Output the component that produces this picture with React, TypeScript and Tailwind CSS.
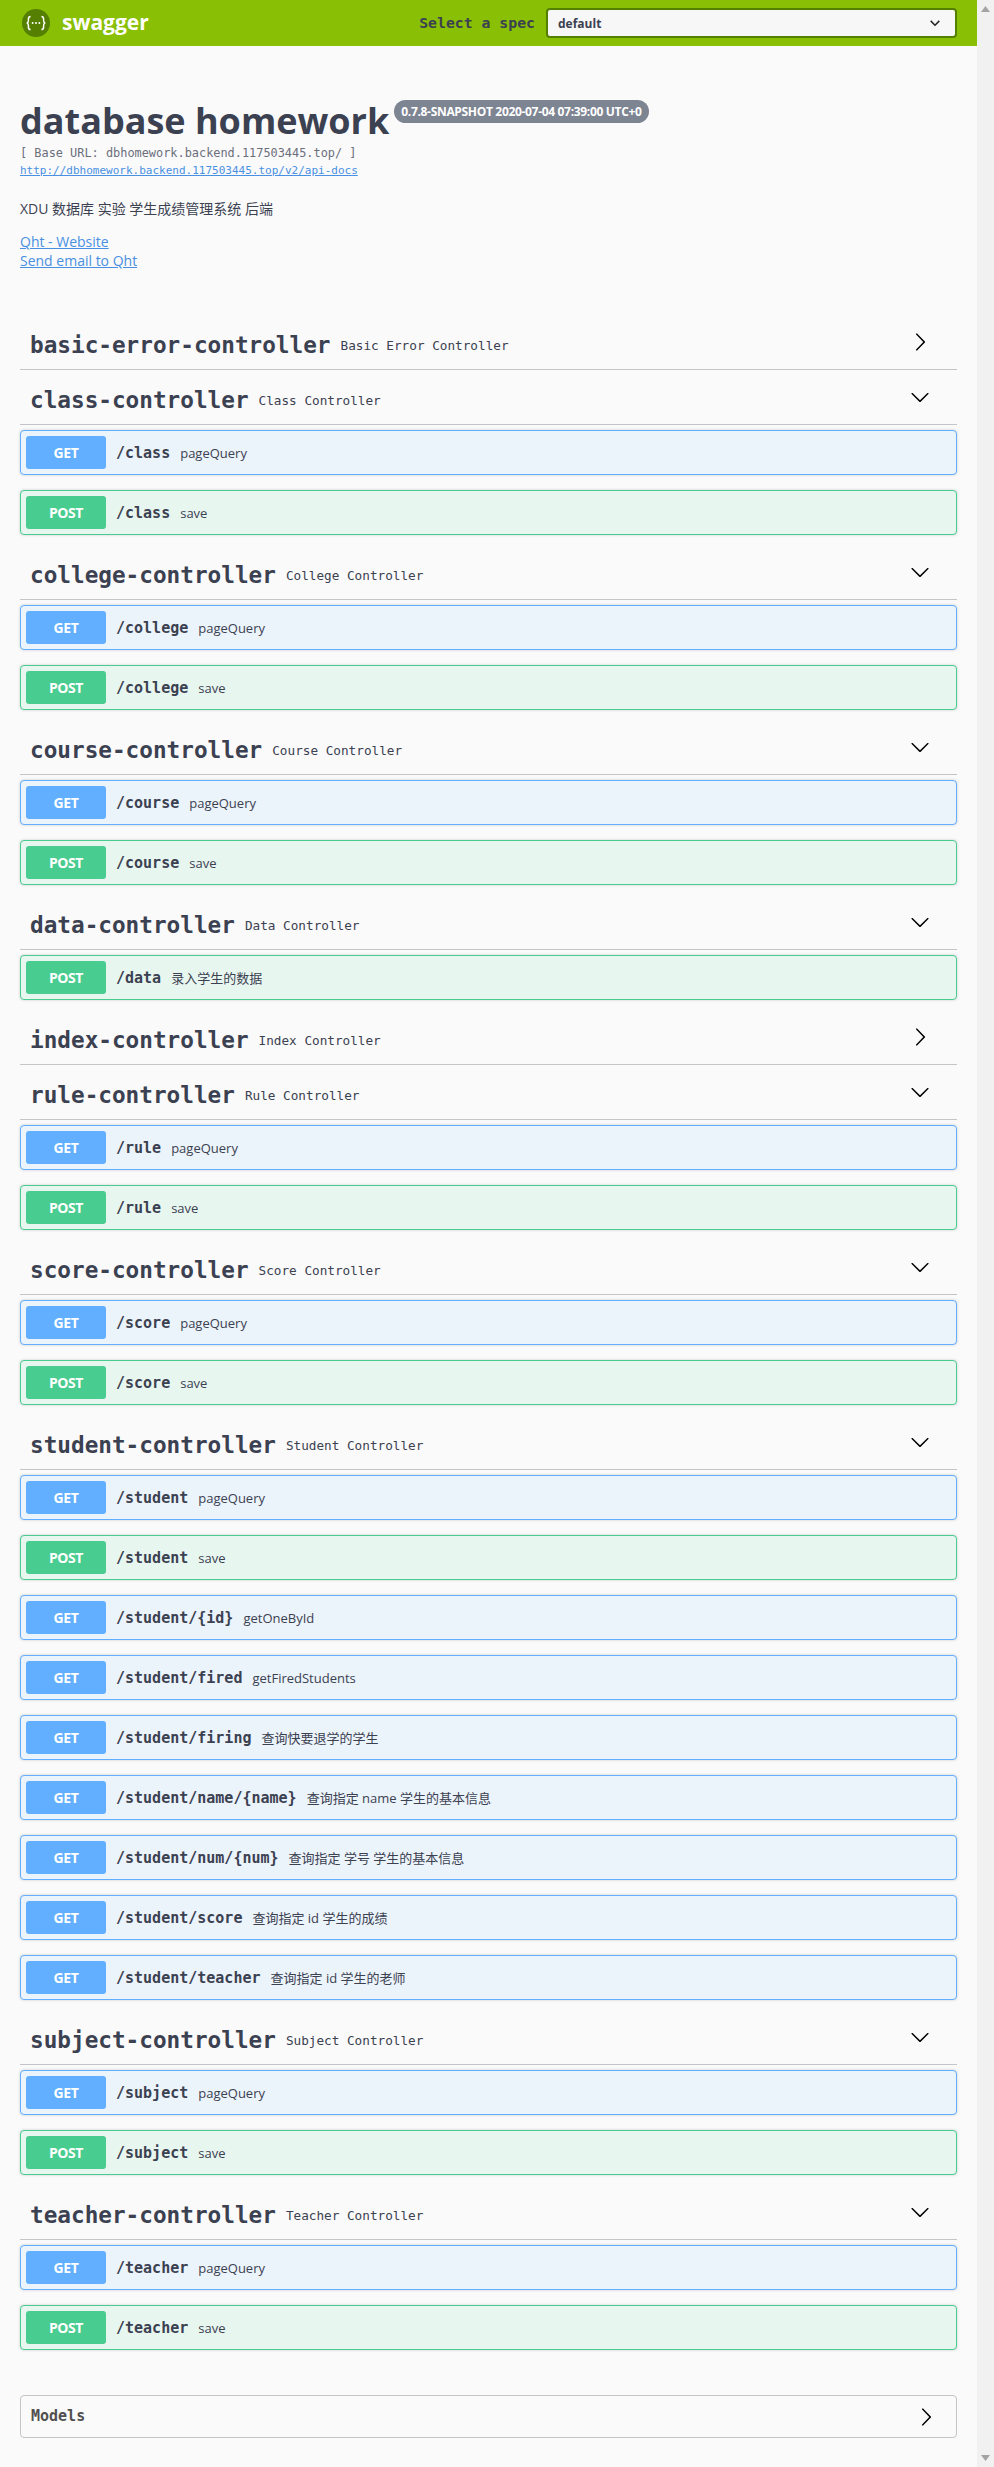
import React from "react"

type Op = { method: "GET" | "POST"; path: string; summary: string }
type Tag = { name: string; desc: string; open: boolean; ops: Op[] }

const crud = (path: string): Op[] => [
  { method: "GET", path, summary: "pageQuery" },
  { method: "POST", path, summary: "save" },
]

const tags: Tag[] = [
  { name: "basic-error-controller", desc: "Basic Error Controller", open: false, ops: [] },
  { name: "class-controller", desc: "Class Controller", open: true, ops: crud("/class") },
  { name: "college-controller", desc: "College Controller", open: true, ops: crud("/college") },
  { name: "course-controller", desc: "Course Controller", open: true, ops: crud("/course") },
  { name: "data-controller", desc: "Data Controller", open: true, ops: [{ method: "POST", path: "/data", summary: "录入学生的数据" }] },
  { name: "index-controller", desc: "Index Controller", open: false, ops: [] },
  { name: "rule-controller", desc: "Rule Controller", open: true, ops: crud("/rule") },
  { name: "score-controller", desc: "Score Controller", open: true, ops: crud("/score") },
  {
    name: "student-controller",
    desc: "Student Controller",
    open: true,
    ops: [
      ...crud("/student"),
      { method: "GET", path: "/student/{id}", summary: "getOneById" },
      { method: "GET", path: "/student/fired", summary: "getFiredStudents" },
      { method: "GET", path: "/student/firing", summary: "查询快要退学的学生" },
      { method: "GET", path: "/student/name/{name}", summary: "查询指定 name 学生的基本信息" },
      { method: "GET", path: "/student/num/{num}", summary: "查询指定 学号 学生的基本信息" },
      { method: "GET", path: "/student/score", summary: "查询指定 id 学生的成绩" },
      { method: "GET", path: "/student/teacher", summary: "查询指定 id 学生的老师" },
    ],
  },
  { name: "subject-controller", desc: "Subject Controller", open: true, ops: crud("/subject") },
  { name: "teacher-controller", desc: "Teacher Controller", open: true, ops: crud("/teacher") },
]

function ArrowRight({ className }: { className: string }) {
  return (
    <svg viewBox="0 0 20 20" className={className} fill="#000">
      <path d="M13.25 10L6.109 2.58c-.268-.27-.268-.707 0-.979.268-.27.701-.27.969 0l7.83 7.908c.268.271.268.709 0 .979l-7.83 7.908c-.268.271-.701.27-.969 0-.268-.269-.268-.707 0-.979L13.25 10z" />
    </svg>
  )
}

function ArrowDown({ className }: { className: string }) {
  return (
    <svg viewBox="0 0 20 20" className={className} fill="#000">
      <path d="M17.418 6.109c.272-.268.709-.268.979 0s.271.701 0 .969l-7.908 7.83c-.27.268-.707.268-.979 0l-7.908-7.83c-.27-.268-.27-.701 0-.969.271-.268.709-.268.979 0L10 13.25l7.418-7.141z" />
    </svg>
  )
}

function Logo() {
  return (
    <svg viewBox="0 0 28 28" className="w-[28px] h-[28px] shrink-0">
      <circle cx="14" cy="14" r="14" fill="#547f00" />
      <path
        d="M8.6 7.4c-2 0-2.2 1-2.2 2.6v1.8c0 1.2-.6 2-1.6 2.2 1 .2 1.6 1 1.6 2.2V18c0 1.6.2 2.6 2.2 2.6M19.4 7.4c2 0 2.2 1 2.2 2.6v1.8c0 1.2.6 2 1.6 2.2-1 .2-1.6 1-1.6 2.2V18c0 1.6-.2 2.6-2.2 2.6"
        fill="none"
        stroke="#fff"
        strokeWidth="1.5"
      />
      <circle cx="10.6" cy="14" r="1" fill="#fff" />
      <circle cx="14" cy="14" r="1" fill="#fff" />
      <circle cx="17.4" cy="14" r="1" fill="#fff" />
    </svg>
  )
}

function OpBlock({ op }: { op: Op }) {
  const isGet = op.method === "GET"
  return (
    <div
      className={`flex items-center h-[45px] mb-[15px] p-[5px] border rounded-[4px] shadow-[0_0_3px_rgba(0,0,0,0.19)] ${
        isGet ? "border-[#61affe] bg-[#ebf3fb]" : "border-[#49cc90] bg-[#e8f6f0]"
      }`}
    >
      <div
        className={`w-[80px] h-[33px] flex items-center justify-center rounded-[3px] text-white text-[14px] font-bold font-['Open_Sans',sans-serif] tracking-[-0.4px] ${
          isGet ? "bg-[#61affe]" : "bg-[#49cc90]"
        }`}
      >
        {op.method}
      </div>
      <span className="ml-[10px] mt-[2px] font-['DejaVu_Sans_Mono',monospace] font-bold text-[15px] text-[#3b4151]">{op.path}</span>
      <span className="ml-[10px] mt-[2px] font-['Open_Sans','Noto_Sans_CJK_SC',sans-serif] text-[13px] text-[#3b4151]">{op.summary}</span>
    </div>
  )
}

function TagSection({ tag }: { tag: Tag }) {
  return (
    <div>
      <div className="flex items-center h-[50px] mb-[5px] pl-[10px] pr-[27px] border-b border-[#c4c5c9]">
        <span className="mt-[2px] font-['DejaVu_Sans_Mono',monospace] font-bold text-[22.7px] text-[#3b4151]">{tag.name}</span>
        <span className="ml-[10px] mt-[2px] font-['DejaVu_Sans_Mono',monospace] text-[12.7px] text-[#3b4151]">{tag.desc}</span>
        {tag.open ? (
          <ArrowDown className="w-[20px] h-[20px] ml-auto mb-[6px]" />
        ) : (
          <ArrowRight className="w-[20px] h-[20px] ml-auto mb-[6px]" />
        )}
      </div>
      {tag.ops.map((op) => (
        <OpBlock key={op.method + op.path} op={op} />
      ))}
    </div>
  )
}

export default function App() {
  return (
    <div className="flex w-[994px] h-[2467px] overflow-hidden bg-[#fafafa] text-[#3b4151]">
      <div className="flex-1 min-w-0">
        {/* Topbar */}
        <div className="flex items-center h-[46px] pl-[22px] pr-[20px] bg-[#89bf04]">
          <Logo />
          <span className="ml-[12px] font-['Open_Sans',sans-serif] font-bold text-[21px] text-white">swagger</span>
          <span className="ml-auto font-['DejaVu_Sans_Mono',monospace] font-bold text-[14.8px] text-[#3b4151]">Select a spec</span>
          <div className="flex items-center justify-between w-[411px] h-[30px] ml-[11px] pl-[10px] pr-[15px] bg-[#f7f7f7] border-2 border-[#547f00] rounded-[4px]">
            <span className="mt-[1px] font-['Open_Sans',sans-serif] font-bold text-[12px] text-[#3b4151]">default</span>
            <svg viewBox="0 0 10 7" className="w-[10px] h-[7px]" fill="none" stroke="#222" strokeWidth="1.5">
              <path d="M.7.9 5 5.2 9.3.9" />
            </svg>
          </div>
        </div>

        <div className="px-[20px]">
          {/* Info */}
          <div className="h-[274px] pt-[50px]">
            <div className="flex items-start">
              <h2 className="font-['Open_Sans',sans-serif] font-bold text-[36px] leading-[48px] mt-[1px] text-[#3b4151]">database homework</h2>
              <span className="ml-[5px] mt-[4px] h-[23px] px-[7px] flex items-center rounded-[57px] bg-[#7d8492] text-white font-['Open_Sans',sans-serif] font-bold text-[12px] tracking-[-0.32px] whitespace-nowrap">
                0.7.8-SNAPSHOT 2020-07-04 07:39:00 UTC+0
              </span>
            </div>
            <div className="font-['DejaVu_Sans_Mono',monospace] text-[11.9px] leading-[16px] text-[#6b6f7c]">[ Base URL: dbhomework.backend.117503445.top/ ]</div>
            <a href="#" className="block mt-[2px] font-['DejaVu_Sans_Mono',monospace] text-[11px] leading-[16px] text-[#4990e2] underline">
              http://dbhomework.backend.117503445.top/v2/api-docs
            </a>
            <p className="mt-[20px] font-['Open_Sans','Noto_Sans_CJK_SC',sans-serif] text-[14px] leading-[20px] text-[#3b4151]">XDU 数据库 实验 学生成绩管理系统 后端</p>
            <a href="#" className="block mt-[13px] font-['Open_Sans',sans-serif] text-[14px] leading-[19px] text-[#4990e2] underline">Qht - Website</a>
            <a href="#" className="block font-['Open_Sans',sans-serif] text-[14px] leading-[19px] text-[#4990e2] underline">Send email to Qht</a>
          </div>

          {/* Tags */}
          {tags.map((tag) => (
            <TagSection key={tag.name} tag={tag} />
          ))}

          {/* Models */}
          <div className="flex items-center justify-between h-[43px] mt-[45px] pl-[10px] pr-[20px] border border-[#c4c5c9] rounded-[4px]">
            <span className="font-['DejaVu_Sans_Mono',monospace] font-bold text-[15px] text-[#505050]">Models</span>
            <ArrowRight className="w-[20px] h-[20px]" />
          </div>
        </div>
      </div>

      {/* Scrollbar */}
      <div className="w-[17px] shrink-0 bg-[#f1f1f1] flex flex-col items-center justify-between py-[6px]">
        <svg viewBox="0 0 9 6" className="w-[9px] h-[6px]" fill="#a3a3a3">
          <path d="M4.5 0 9 6H0z" />
        </svg>
        <svg viewBox="0 0 9 6" className="w-[9px] h-[6px]" fill="#a3a3a3">
          <path d="M4.5 6 9 0H0z" />
        </svg>
      </div>
    </div>
  )
}
